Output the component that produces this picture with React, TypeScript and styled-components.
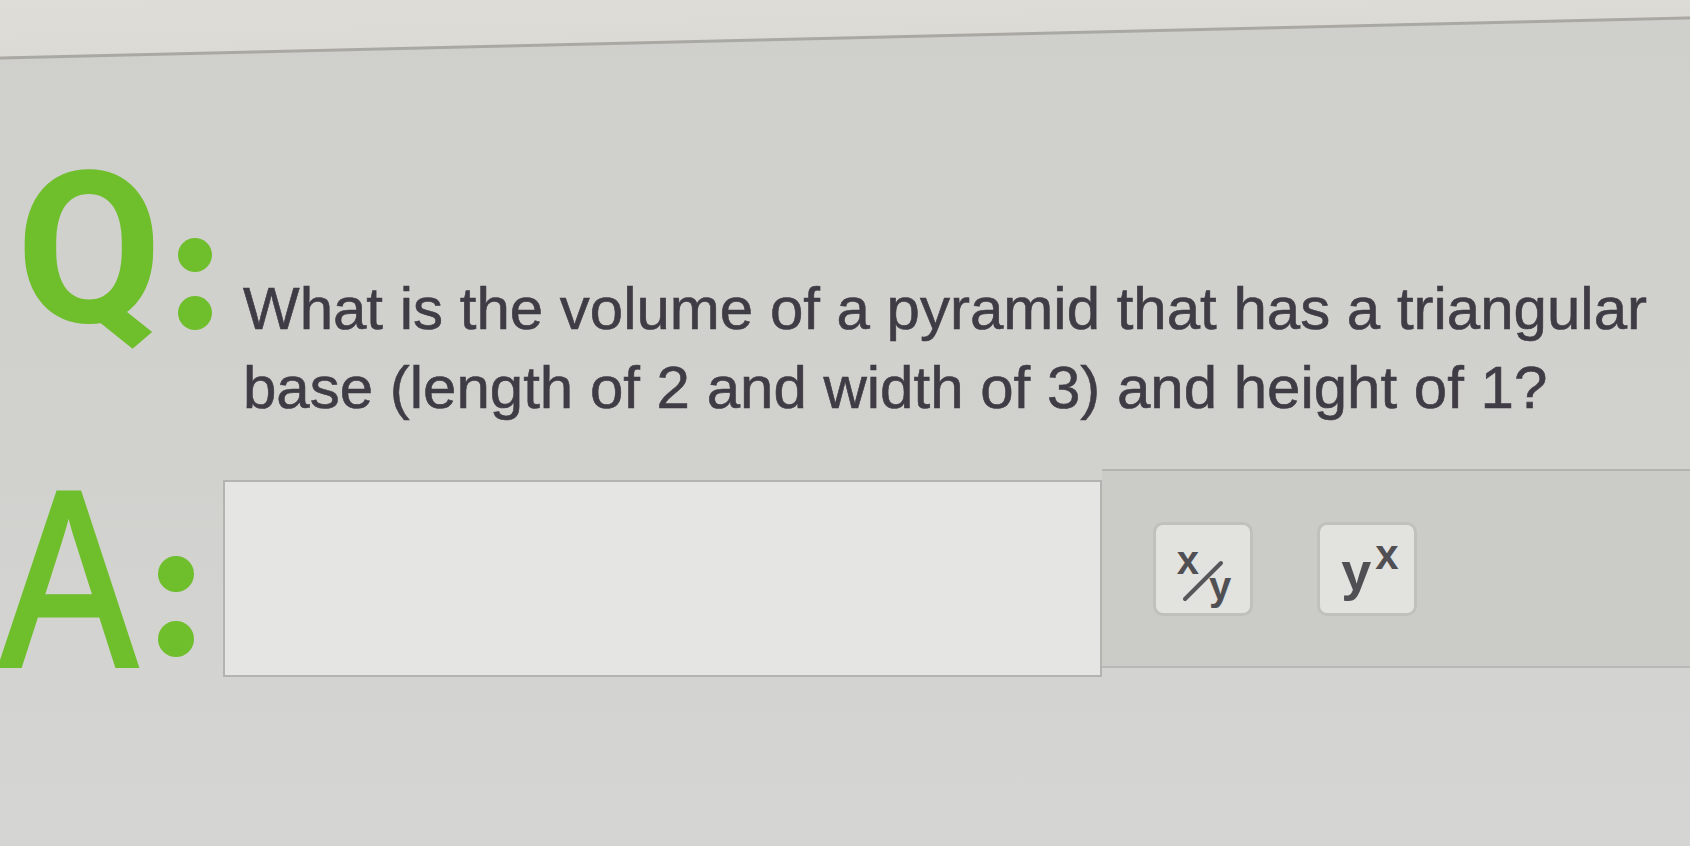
import styled, { createGlobalStyle } from "styled-components";

const GlobalStyle = createGlobalStyle`
  html, body {
    margin: 0;
    padding: 0;
  }
  body {
    background: #d2d2cf;
    font-family: "Liberation Sans", Arial, sans-serif;
  }
`;

const GREEN = "#6fbe2c";

const Page = styled.div`
  width: 1690px;
  height: 846px;
  overflow: hidden;
  display: flex;
  flex-direction: column;
  background: linear-gradient(180deg, #cfcfcb 0%, #d1d1ce 55%, #d5d5d3 100%);
`;

// the screen edge runs slightly uphill to the right in the photo
const TopBar = styled.div`
  flex: none;
  height: 60px;
  background: linear-gradient(
    178.64deg,
    #dfddd8 0,
    #dcdad5 56px,
    #a9a8a3 57px,
    #a9a8a3 59px,
    #cfcfcb 60px,
    #cfcfcb 100%
  );
`;

const Row = styled.div<{ $top: number }>`
  display: flex;
  align-items: flex-start;
  margin-top: ${(p) => p.$top}px;
`;

const Label = styled.div<{ $width: number; $pad: number }>`
  flex: none;
  display: flex;
  align-items: flex-start;
  box-sizing: border-box;
  width: ${(p) => p.$width}px;
  padding-left: ${(p) => p.$pad}px;
`;

const Letter = styled.span<{
  $size: number;
  $weight: number;
  $scale: number;
  $width: number;
  $font: string;
  $stroke: number;
  $top: number;
}>`
  display: block;
  flex: none;
  width: ${(p) => p.$width}px;
  margin-top: ${(p) => p.$top}px;
  font-family: ${(p) => p.$font};
  font-size: ${(p) => p.$size}px;
  line-height: ${(p) => p.$size}px;
  font-weight: ${(p) => p.$weight};
  color: ${GREEN};
  -webkit-text-stroke: ${(p) => p.$stroke}px ${GREEN};
  white-space: nowrap;
  transform: scaleX(${(p) => p.$scale});
  transform-origin: left top;
`;

const Colon = styled.div<{ $top: number; $left: number; $gap: number }>`
  display: flex;
  flex-direction: column;
  gap: ${(p) => p.$gap}px;
  margin-top: ${(p) => p.$top}px;
  margin-left: ${(p) => p.$left}px;
`;

const Dot = styled.span<{ $size: number }>`
  display: block;
  width: ${(p) => p.$size}px;
  height: ${(p) => p.$size}px;
  border-radius: 50%;
  background: ${GREEN};
`;

const QuestionText = styled.p`
  margin: 0;
  padding-top: 131px;
  font-size: 60px;
  line-height: 79px;
  color: #3f3c45;
  -webkit-text-stroke: 0.6px #3f3c45;
  white-space: nowrap;
`;

const AnswerBox = styled.div`
  flex: none;
  box-sizing: border-box;
  width: 879px;
  height: 197px;
  margin-top: 26px;
  background: #e5e5e3;
  border: 2px solid #b3b3b0;
`;

const Toolbar = styled.div`
  flex: 1;
  box-sizing: border-box;
  height: 199px;
  margin-top: 15px;
  display: flex;
  align-items: flex-start;
  gap: 64px;
  padding: 51px 0 0 51px;
  background: #cbcbc8;
  border-top: 2px solid #b3b3af;
  border-bottom: 2px solid #b9b9b5;
`;

const KeyButton = styled.button`
  width: 100px;
  height: 94px;
  padding: 0;
  display: flex;
  align-items: center;
  justify-content: center;
  box-sizing: border-box;
  background: #e2e2df;
  border: 3px solid #c0c0bc;
  border-radius: 10px;
  color: #505054;
  font-family: "Liberation Sans", Arial, sans-serif;
  font-weight: 700;
  cursor: pointer;
`;

const FracGlyph = styled.span`
  display: inline-flex;
  height: 66px;
  margin-top: 8px;
  margin-left: 2px;
`;

const FracPart = styled.span<{ $end?: boolean }>`
  align-self: ${(p) => (p.$end ? "flex-end" : "flex-start")};
  margin-left: ${(p) => (p.$end ? -15 : 0)}px;
  font-size: 40px;
  line-height: 40px;
`;

const Slash = styled.svg`
  align-self: center;
  flex: none;
  margin-left: -17px;
  margin-top: 16px;
`;

const PowGlyph = styled.span`
  display: inline-flex;
  align-items: flex-start;
  margin-left: 6px;
  margin-top: 4px;
`;

const PowBase = styled.span`
  font-size: 54px;
  line-height: 54px;
`;

const PowSup = styled.span`
  font-size: 42px;
  line-height: 42px;
  margin-top: -10px;
  margin-left: 4px;
  font-weight: 700;
`;

export default function App() {
  return (
    <Page>
      <GlobalStyle />
      <TopBar />
      <Row $top={78}>
        <Label $width={243} $pad={16}>
          <Letter
            $font={'Roboto, "Liberation Sans", sans-serif'}
            $size={212}
            $weight={700}
            $scale={1}
            $width={136}
            $stroke={0}
            $top={6}
          >
            Q
          </Letter>
          <Colon $top={100} $left={26} $gap={24}>
            <Dot $size={34} />
            <Dot $size={34} />
          </Colon>
        </Label>
        <QuestionText>
          What is the volume of a pyramid that has a triangular
          <br />
          base (length of 2 and width of 3) and height of 1?
        </QuestionText>
      </Row>
      <Row $top={27}>
        <Label $width={223} $pad={0}>
          <Letter
            $font={'"Liberation Sans", Arial, sans-serif'}
            $size={250}
            $weight={400}
            $scale={0.82}
            $width={140}
            $stroke={5}
            $top={0}
          >
            A
          </Letter>
          <Colon $top={102} $left={18} $gap={29}>
            <Dot $size={36} />
            <Dot $size={36} />
          </Colon>
        </Label>
        <AnswerBox />
        <Toolbar>
          <KeyButton aria-label="fraction">
            <FracGlyph>
              <FracPart>x</FracPart>
              <Slash width="42" height="42" viewBox="0 0 42 42">
                <line x1="3" y1="39" x2="39" y2="3" stroke="#56565a" strokeWidth="4" strokeLinecap="round" />
              </Slash>
              <FracPart $end>y</FracPart>
            </FracGlyph>
          </KeyButton>
          <KeyButton aria-label="power">
            <PowGlyph>
              <PowBase>y</PowBase>
              <PowSup>x</PowSup>
            </PowGlyph>
          </KeyButton>
        </Toolbar>
      </Row>
    </Page>
  );
}
